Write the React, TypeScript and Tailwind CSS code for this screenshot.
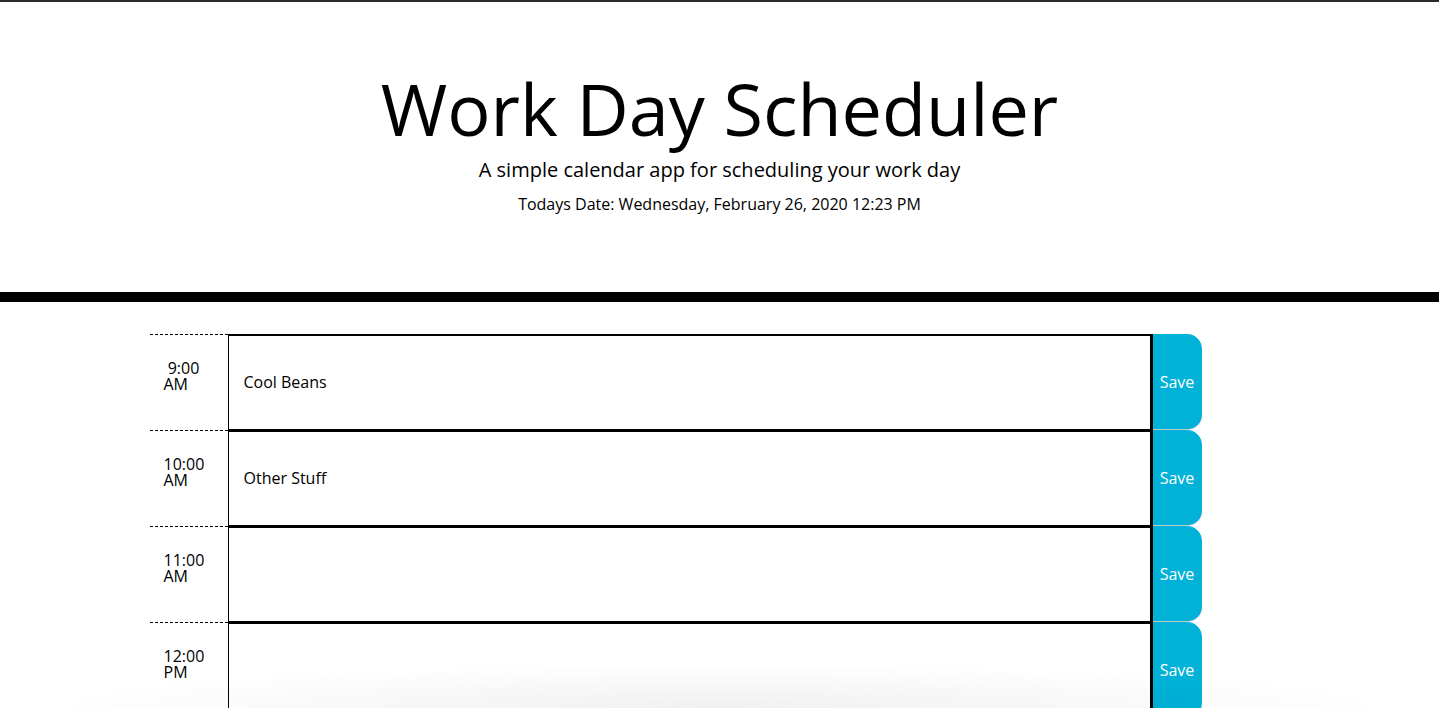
const hours = [
  { time: '\u00a09:00', period: 'AM', note: 'Cool Beans' },
  { time: '10:00', period: 'AM', note: 'Other Stuff' },
  { time: '11:00', period: 'AM', note: '' },
  { time: '12:00', period: 'PM', note: '' },
  { time: '1:00', period: 'PM', note: '' },
  { time: '2:00', period: 'PM', note: '' },
  { time: '3:00', period: 'PM', note: '' },
  { time: '4:00', period: 'PM', note: '' },
  { time: '5:00', period: 'PM', note: '' },
];

const TimeBlock = ({ time, period, note }: { time: string; period: string; note: string }) => (
  <div className="flex h-[96px]">
    {/* hour label */}
    <div className="w-[78px] border-t border-dashed border-black pl-[14px] pt-[25px] text-[16px] leading-[16px] text-black">
      <div>{time}</div>
      <div>{period}</div>
    </div>

    {/* description */}
    <div className="flex w-[925px] items-center border-t-2 border-b border-l border-r-[3px] border-black pb-[1px] pl-[15px] text-[16px] text-black">
      {note}
    </div>

    {/* save */}
    <button className="flex w-[49px] items-center justify-center rounded-r-[15px] border-b border-[#c8c8c8] bg-[#00b2d8] text-[16px] text-white">
      Save
    </button>
  </div>
);

export default function App() {
  return (
    <div
      className="min-h-screen bg-white"
      style={{ fontFamily: '"Open Sans", "Liberation Sans", sans-serif' }}
    >
      <div className="h-[2px] bg-[#2b2b2b]" />

      {/* Header */}
      <header className="border-b-[10px] border-black pb-[76px] pt-[63px] text-center text-black">
        <h1 className="text-[72px] font-normal leading-[86px]">Work Day Scheduler</h1>
        <p className="mt-[7px] text-[20px] leading-[24px]">
          A simple calendar app for scheduling your work day
        </p>
        <p className="mt-[10px] text-[16px] leading-[24px]">
          Todays Date: Wednesday, February 26, 2020 12:23 PM
        </p>
      </header>

      {/* Schedule */}
      <main className="mx-auto w-[1140px] pt-[32px] pb-[40px]">
        {hours.map((h) => (
          <TimeBlock key={h.time} {...h} />
        ))}
      </main>

      {/* soft bottom shade */}
      <div className="pointer-events-none fixed bottom-0 left-[40px] right-[40px] h-[44px] bg-[radial-gradient(ellipse_at_bottom,rgba(0,0,0,0.06),transparent_70%)]" />
    </div>
  );
}
